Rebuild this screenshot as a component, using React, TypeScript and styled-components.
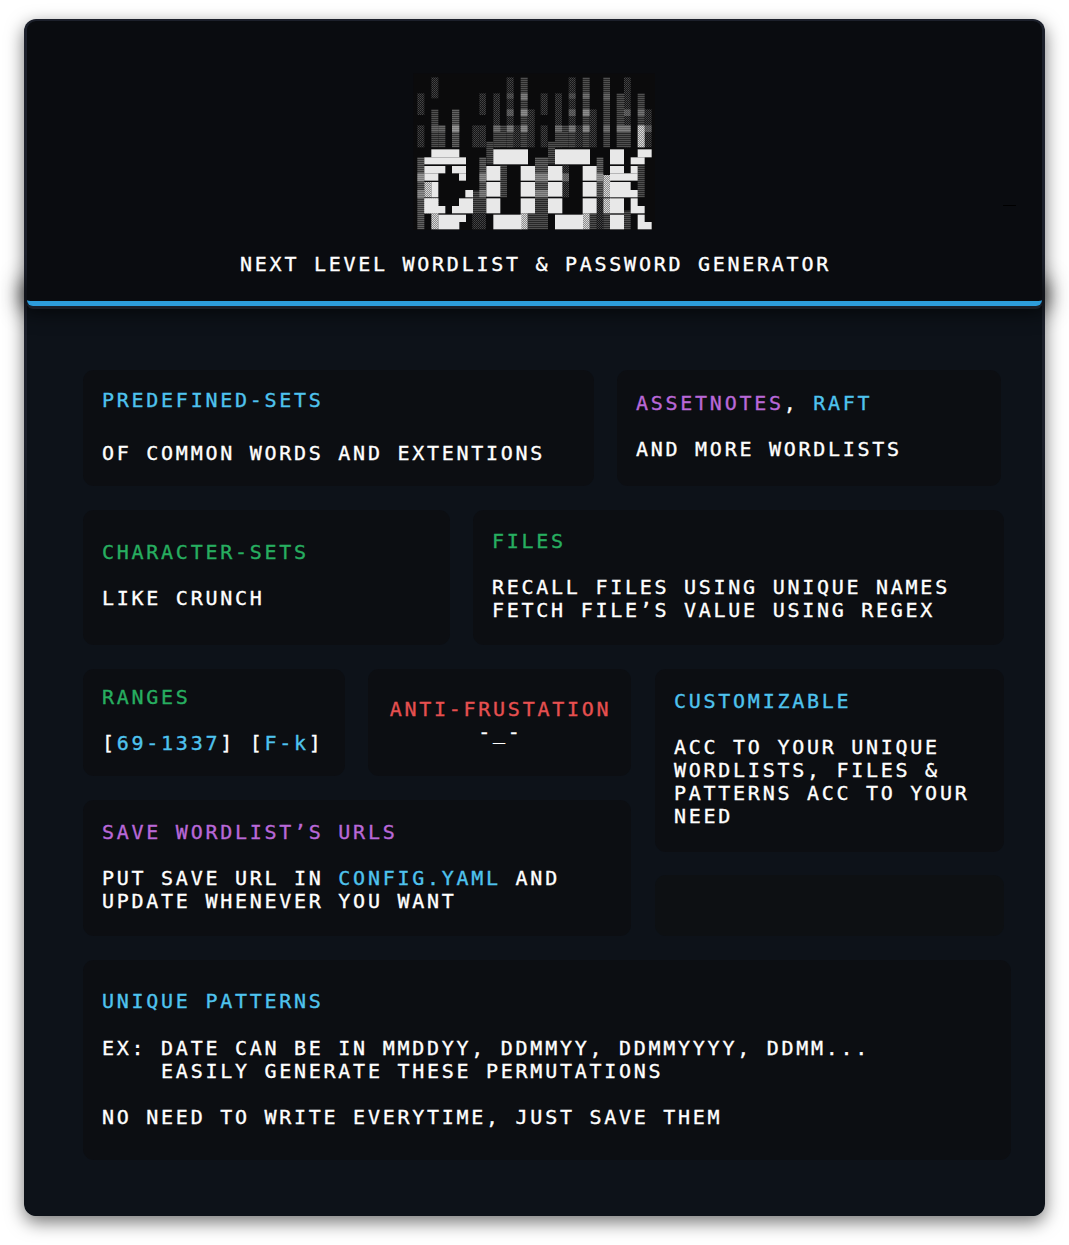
import React from "react";
import styled, { createGlobalStyle } from "styled-components";

const Global = createGlobalStyle`
  html, body { margin: 0; padding: 0; background: #fff; }
`;

const Page = styled.div`
  box-sizing: border-box;
  width: 1069px;
  height: 1245px;
  padding: 19px 24px 29px;
  font-family: "DejaVu Sans Mono", "Liberation Mono", monospace;
`;

const Shell = styled.div`
  position: relative;
  box-sizing: border-box;
  height: 1197px;
  padding: 2px 3px 0;
  border-radius: 12px;
  background: linear-gradient(#1c202b 0, #1c202b 35%, #0d131a 45%, #0d1219 100%);
  box-shadow: 0 6px 18px rgba(0, 0, 0, 0.55);
  display: flex;
  flex-direction: column;
  &::before {
    content: "";
    position: absolute;
    left: 5px;
    right: 5px;
    top: 268px;
    height: 16px;
    box-shadow: 0 0 22px 6px rgba(0, 0, 0, 0.85);
  }
`;

const Header = styled.header`
  position: relative;
  z-index: 1;
  flex: none;
  box-sizing: border-box;
  height: 285px;
  background: #0a0c10;
  border-radius: 9px 9px 6px 6px;
  border-bottom: 5px solid #2d9cdb;
  box-shadow: 0 3px 0 #1a1e28;
  display: flex;
  flex-direction: column;
  align-items: center;
`;

const Logo = styled.svg`
  display: block;
  flex: none;
  margin-top: 39px;
`;

const Tagline = styled.h1`
  margin: 12px 0 0;
  padding-left: 2px;
  font-size: 20px;
  line-height: 24px;
  font-weight: 400;
  letter-spacing: 2.73px;
  -webkit-text-stroke: 0.35px currentColor;
  color: #fff;
  white-space: pre;
`;

const Speck = styled.span`
  position: absolute;
  left: 976px;
  top: 184px;
  width: 13px;
  height: 1px;
  background: #000;
`;

const Main = styled.main`
  flex: 1;
  background: #0d1219;
  border-radius: 0 0 9px 9px;
  padding: 64px 0 0 56px;
  display: flex;
  flex-direction: column;
  gap: 24px;
`;

const Row = styled.div<{ $gap?: number }>`
  display: flex;
  align-items: flex-start;
  gap: ${(p) => p.$gap ?? 23}px;
`;

const Column = styled.div<{ $w: number; $gap: number }>`
  width: ${(p) => p.$w}px;
  display: flex;
  flex-direction: column;
  gap: ${(p) => p.$gap}px;
`;

const Card = styled.section<{ $w: number; $h: number; $center?: boolean; $pb?: number }>`
  box-sizing: border-box;
  flex: none;
  width: ${(p) => p.$w}px;
  height: ${(p) => p.$h}px;
  padding: 0 19px ${(p) => p.$pb ?? 4}px ${(p) => (p.$center ? 21 : 19)}px;
  border-radius: 11px;
  background: #0c0e12;
  display: flex;
  flex-direction: column;
  justify-content: center;
  align-items: ${(p) => (p.$center ? "center" : "flex-start")};
  color: #fff;
  font-size: 20px;
  line-height: 23px;
  letter-spacing: 2.73px;
  -webkit-text-stroke: 0.35px currentColor;
  white-space: pre;
`;

const Blank = styled(Card)`
  background: #0d1013;
`;

const Title = styled.div<{ $gap?: number }>`
  margin-bottom: ${(p) => p.$gap ?? 23}px;
`;

const Line = styled.div<{ $gap?: number }>`
  margin-top: ${(p) => p.$gap ?? 0}px;
`;

const Tint = styled.span<{ $c: "blue" | "purple" | "green" | "red" }>`
  color: ${(p) =>
    ({ blue: "#4fc3ee", purple: "#b968d8", green: "#27ae60", red: "#e65050" })[p.$c]};
`;

type Cell = [number, number, number, number, number];

const shades: Cell[] = [
  [52, 100, 21, 65, 1], [52, 196, 21, 66, 1], [52, 292, 21, 216, 3],
  [94, 52, 21, 63, 1], [94, 148, 21, 114, 2], [115, 196, 21, 66, 2],
  [156, 148, 22, 114, 3], [217, 196, 21, 66, 1], [238, 196, 20, 66, 1], [238, 100, 20, 65, 1],
  [259, 245, 21, 68, 2], [280, 100, 20, 162, 1], [280, 196, 20, 66, 2], [300, 196, 20, 66, 2],
  [320, 52, 21, 210, 1], [320, 196, 21, 66, 2], [341, 196, 21, 66, 1],
  [362, 52, 21, 210, 2], [383, 148, 21, 114, 1],
  [422, 100, 21, 65, 1], [422, 196, 21, 66, 1], [444, 245, 21, 68, 2],
  [465, 100, 21, 162, 1], [465, 196, 21, 66, 2], [486, 196, 20, 66, 2],
  [506, 52, 21, 210, 1], [506, 196, 21, 66, 2], [527, 196, 21, 66, 1],
  [548, 52, 21, 210, 2], [569, 148, 21, 114, 1],
  [610, 52, 20, 210, 2], [650, 100, 22, 162, 2], [672, 52, 20, 210, 1], [672, 196, 20, 66, 2],
  [713, 100, 21, 162, 2], [734, 148, 21, 114, 1],
  [238, 292, 20, 120, 3], [217, 392, 41, 68, 2], [217, 460, 41, 48, 1],
  [300, 316, 21, 96, 2], [405, 292, 39, 120, 3], [405, 412, 39, 96, 2],
  [486, 316, 21, 96, 1], [590, 292, 20, 120, 3], [590, 412, 20, 96, 1], [610, 460, 20, 48, 2],
  [672, 452, 20, 56, 2], [713, 316, 21, 96, 2],
  [383, 460, 22, 48, 2], [569, 460, 21, 48, 2],
];

const glows: Cell[] = [
  [94, 196, 42, 20, 2], [156, 196, 22, 20, 5], [280, 196, 21, 20, 3], [320, 196, 21, 20, 4],
  [362, 196, 21, 20, 5], [320, 148, 21, 20, 3], [362, 148, 21, 20, 5], [362, 100, 21, 20, 4],
  [320, 100, 21, 16, 2], [465, 196, 21, 20, 3], [506, 196, 21, 20, 4], [548, 196, 21, 20, 5],
  [506, 148, 21, 20, 3], [548, 148, 21, 20, 5], [506, 100, 21, 16, 2], [548, 100, 21, 16, 3],
  [610, 196, 20, 20, 3], [610, 100, 20, 20, 2], [650, 196, 42, 20, 4], [672, 148, 20, 20, 3],
  [713, 148, 21, 20, 3], [734, 196, 21, 20, 3],
  [52, 340, 21, 24, 5], [52, 390, 21, 24, 4], [238, 340, 20, 24, 4], [238, 390, 20, 22, 4],
  [405, 340, 39, 24, 4], [405, 390, 39, 22, 4], [486, 340, 21, 24, 4], [590, 340, 20, 24, 5],
];

const bright: Cell[] = [
  [713, 196, 21, 66, 1],
  [73, 366, 21, 46, 1], [73, 415, 42, 45, 1], [94, 460, 21, 48, 1],
  [362, 460, 21, 48, 1], [548, 460, 21, 48, 1], [610, 345, 21, 67, 1], [610, 415, 21, 45, 1],
];

const whites: number[][] = [
  [94, 268, 84, 24], [73, 292, 125, 21], [73, 318, 63, 22], [156, 318, 42, 22], [73, 340, 42, 22],
  [177, 340, 21, 22], [94, 366, 21, 46], [196, 390, 23, 22], [73, 415, 42, 23], [177, 415, 42, 23],
  [73, 438, 63, 22], [156, 438, 63, 22], [115, 464, 83, 22], [115, 486, 63, 22],
  [280, 268, 104, 45], [259, 318, 42, 44], [259, 366, 42, 44], [259, 415, 42, 45],
  [362, 318, 43, 44], [362, 366, 43, 44], [362, 415, 43, 45], [280, 464, 84, 44],
  [465, 268, 105, 45], [444, 318, 43, 44], [444, 366, 43, 44], [444, 415, 43, 45],
  [548, 318, 42, 44], [548, 366, 42, 44], [548, 415, 42, 45], [465, 464, 84, 44],
  [630, 268, 42, 45], [713, 268, 42, 24], [692, 292, 42, 21], [630, 318, 42, 22], [692, 318, 21, 22],
  [630, 340, 83, 22], [630, 366, 62, 24], [630, 390, 83, 22], [630, 415, 42, 45], [692, 415, 21, 23],
  [692, 438, 42, 22], [630, 464, 42, 44], [713, 464, 21, 22], [713, 486, 42, 22],
];

const CookLogo = () => (
  <Logo width={270} height={180} viewBox="0 0 810 540" role="img" aria-label="COOK">
    <defs>
      <pattern id="s1" width="6" height="6" patternUnits="userSpaceOnUse">
        <rect width="6" height="6" fill="#141416" />
        <rect width="3" height="3" fill="#464646" />
        <rect x="3" y="3" width="3" height="3" fill="#3a3a3a" />
      </pattern>
      <pattern id="s2" width="6" height="6" patternUnits="userSpaceOnUse">
        <rect width="6" height="6" fill="#282828" />
        <rect width="6" height="3" fill="#505050" />
      </pattern>
      <pattern id="s3" width="6" height="6" patternUnits="userSpaceOnUse">
        <rect width="6" height="6" fill="#363636" />
        <rect width="6" height="3" fill="#626262" />
      </pattern>
      <pattern id="s4" width="6" height="6" patternUnits="userSpaceOnUse">
        <rect width="6" height="6" fill="#8c8c8c" />
        <rect width="3" height="3" fill="#dcdcdc" />
        <rect x="3" y="3" width="3" height="3" fill="#d0d0d0" />
      </pattern>
    </defs>
    <rect x="40" y="40" width="725" height="470" fill="#0b0b0c" />
    {shades.map(([x, y, w, h, l], i) => (
      <rect key={i} x={x} y={y} width={w} height={h} fill={`url(#s${l})`} />
    ))}
    {glows.map(([x, y, w, h, l], i) => (
      <rect key={i} x={x} y={y} width={w} height={h} fill="#fff" opacity={0.07 * l} />
    ))}
    {bright.map(([x, y, w, h], i) => (
      <rect key={i} x={x} y={y} width={w} height={h} fill="url(#s4)" />
    ))}
    {whites.map(([x, y, w, h], i) => (
      <rect key={i} x={x} y={y} width={w} height={h} fill="#e8e8e8" />
    ))}
  </Logo>
);

export default function App() {
  return (
    <Page>
      <Global />
      <Shell>
        <Header>
          <CookLogo />
          <Tagline>NEXT LEVEL WORDLIST &amp; PASSWORD GENERATOR</Tagline>
          <Speck />
        </Header>
        <Main>
          <Row>
            <Card $w={511} $h={116} $pb={2}>
              <Title $gap={30}><Tint $c="blue">PREDEFINED-SETS</Tint></Title>
              <Line>OF COMMON WORDS AND EXTENTIONS</Line>
            </Card>
            <Card $w={384} $h={116}>
              <Title><Tint $c="purple">ASSETNOTES</Tint>, <Tint $c="blue">RAFT</Tint></Title>
              <Line>AND MORE WORDLISTS</Line>
            </Card>
          </Row>
          <Row>
            <Card $w={367} $h={135}>
              <Title><Tint $c="green">CHARACTER-SETS</Tint></Title>
              <Line>LIKE CRUNCH</Line>
            </Card>
            <Card $w={531} $h={135}>
              <Title><Tint $c="green">FILES</Tint></Title>
              <Line>RECALL FILES USING UNIQUE NAMES</Line>
              <Line>FETCH FILE’S VALUE USING REGEX</Line>
            </Card>
          </Row>
          <Row $gap={24}>
            <Column $w={548} $gap={24}>
              <Row>
                <Card $w={262} $h={107}>
                  <Title><Tint $c="green">RANGES</Tint></Title>
                  <Line>[<Tint $c="blue">69-1337</Tint>] [<Tint $c="blue">F-k</Tint>]</Line>
                </Card>
                <Card $w={263} $h={107} $center>
                  <Line><Tint $c="red">ANTI-FRUSTATION</Tint></Line>
                  <Line>-_-</Line>
                </Card>
              </Row>
              <Card $w={548} $h={136} $pb={2}>
                <Title><Tint $c="purple">SAVE WORDLIST’S URLS</Tint></Title>
                <Line>PUT SAVE URL IN <Tint $c="blue">CONFIG.YAML</Tint> AND</Line>
                <Line>UPDATE WHENEVER YOU WANT</Line>
              </Card>
            </Column>
            <Column $w={349} $gap={23}>
              <Card $w={349} $h={183}>
                <Title><Tint $c="blue">CUSTOMIZABLE</Tint></Title>
                <Line>ACC TO YOUR UNIQUE</Line>
                <Line>WORDLISTS, FILES &amp;</Line>
                <Line>PATTERNS ACC TO YOUR</Line>
                <Line>NEED</Line>
              </Card>
              <Blank $w={349} $h={61} />
            </Column>
          </Row>
          <Row>
            <Card $w={928} $h={200} $pb={1}>
              <Title $gap={24}><Tint $c="blue">UNIQUE PATTERNS</Tint></Title>
              <Line>EX: DATE CAN BE IN MMDDYY, DDMMYY, DDMMYYYY, DDMM...</Line>
              <Line>    EASILY GENERATE THESE PERMUTATIONS</Line>
              <Line $gap={23}>NO NEED TO WRITE EVERYTIME, JUST SAVE THEM</Line>
            </Card>
          </Row>
        </Main>
      </Shell>
    </Page>
  );
}
